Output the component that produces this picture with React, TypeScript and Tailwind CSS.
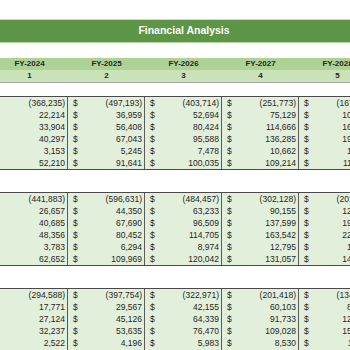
import React from "react";

const years = ["FY-2024", "FY-2025", "FY-2026", "FY-2027", "FY-2028"];

// each section: rows of five yearly values (last column runs off the edge)
const sections: string[][][] = [
    [
        ["(368,235)", "(497,193)", "(403,714)", "(251,773)", "(167,520)"],
        ["22,214", "36,959", "52,694", "75,129", "104,871"],
        ["33,904", "56,408", "80,424", "114,666", "160,062"],
        ["40,297", "67,043", "95,588", "136,285", "190,241"],
        ["3,153", "5,245", "7,478", "10,662", "14,883"],
        ["52,210", "91,641", "100,035", "109,214", "118,994"],
    ],
    [
        ["(441,883)", "(596,631)", "(484,457)", "(302,128)", "(201,024)"],
        ["26,657", "44,350", "63,233", "90,155", "125,845"],
        ["40,685", "67,690", "96,509", "137,599", "192,074"],
        ["48,356", "80,452", "114,705", "163,542", "228,289"],
        ["3,783", "6,294", "8,974", "12,795", "17,860"],
        ["62,652", "109,969", "120,042", "131,057", "142,793"],
    ],
    [
        ["(294,588)", "(397,754)", "(322,971)", "(201,418)", "(134,016)"],
        ["17,771", "29,567", "42,155", "60,103", "83,897"],
        ["27,124", "45,126", "64,339", "91,733", "128,049"],
        ["32,237", "53,635", "76,470", "109,028", "152,193"],
        ["2,522", "4,196", "5,983", "8,530", "11,907"],
        ["41,768", "73,313", "80,028", "87,371", "95,195"],
    ],
];

function Section({ rows }: { rows: string[][] }) {
    return (
        <div className="border-y border-[#4a4a4a] bg-[#e2efda]">
            {rows.map((row, r) => (
                <div key={r} className="flex -ml-[9px] h-[12px]">
                    {row.map((v, c) => (
                        <div
                            key={c}
                            className="w-[77px] shrink-0 flex justify-between items-center border-r border-[#5a5a5a] pr-[2px] leading-[12px]"
                        >
                            <span className={c === 0 ? "pl-[4px] text-[#5b9bd5]" : "pl-[5px]"}>$</span>
                            <span>{v}</span>
                        </div>
                    ))}
                </div>
            ))}
        </div>
    );
}

export default function App() {
    return (
        <div className="w-[350px] h-[350px] overflow-hidden bg-white text-[#262626] text-[8.5px] font-['Liberation_Sans',Arial,sans-serif]">
            <div className="h-[19px]" />
            <div className="h-[24px] bg-[#5c9545] border-t border-[#d6d6d6] border-b border-b-[#b9d7a6] flex items-center justify-center pl-[18px] text-white font-bold text-[10.5px]">
                Financial Analysis
            </div>
            <div className="h-[15px]" />
            <div className="border-b border-[#a6a6a6]">
                <div className="flex -ml-[9px]">
                    {years.map((y, i) => (
                        <div key={y} className="w-[77px] shrink-0 flex flex-col font-bold text-center text-[8px] leading-[12px]">
                            <div className="h-[12px] bg-[#aed296]">{y}</div>
                            <div className="h-[12px] bg-[#c9e2b8]">{i + 1}</div>
                        </div>
                    ))}
                </div>
            </div>
            <div className="h-[13px]" />
            <div className="flex flex-col gap-[22px]">
                {sections.map((s, i) => (
                    <Section key={i} rows={s} />
                ))}
            </div>
        </div>
    );
}
